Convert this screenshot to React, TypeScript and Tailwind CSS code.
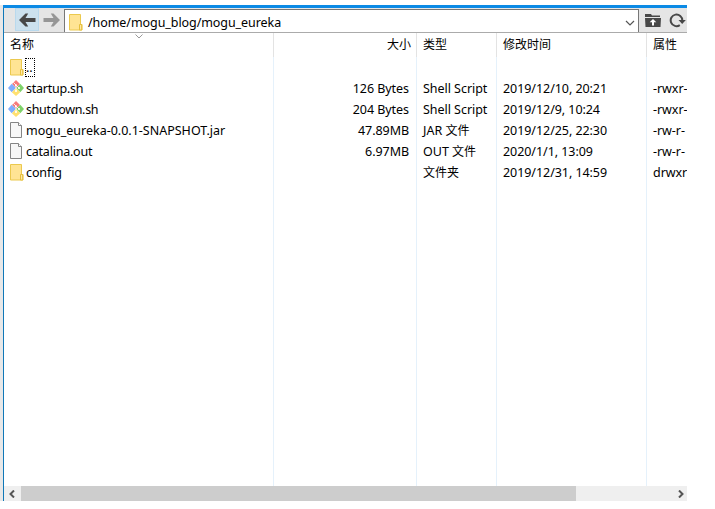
import type { ReactNode } from 'react'

type Kind = 'folder' | 'script' | 'file'
interface Entry { name: string; kind: Kind; size: string; type: string; date: string; attr: string; tracking?: string }

const entries: Entry[] = [
  { name: '..', kind: 'folder', size: '', type: '', date: '', attr: '' },
  { name: 'startup.sh', kind: 'script', size: '126 Bytes', type: 'Shell Script', date: '2019/12/10, 20:21', attr: '-rwxr-', tracking: 'tracking-[-0.24px]' },
  { name: 'shutdown.sh', kind: 'script', size: '204 Bytes', type: 'Shell Script', date: '2019/12/9, 10:24', attr: '-rwxr-', tracking: 'tracking-[-0.3px]' },
  { name: 'mogu_eureka-0.0.1-SNAPSHOT.jar', kind: 'file', size: '47.89MB', type: 'JAR 文件', date: '2019/12/25, 22:30', attr: '-rw-r-' },
  { name: 'catalina.out', kind: 'file', size: '6.97MB', type: 'OUT 文件', date: '2020/1/1, 13:09', attr: '-rw-r-', tracking: 'tracking-[-0.22px]' },
  { name: 'config', kind: 'folder', size: '', type: '文件夹', date: '2019/12/31, 14:59', attr: 'drwxr', tracking: 'tracking-[-0.1px]' },
]

function FolderIcon() {
  return (
    <svg width="14" height="17" viewBox="0 0 14 17" className="shrink-0">
      <path d="M.5.5h11v10h1.5v5.5H.5z" fill="#ffe494" stroke="#ebc94e" />
      <path d="M10.500 16v-5.500h2.200V16z" fill="#ffe9a8" stroke="#e6bf3d" />
    </svg>
  )
}

function FileIcon() {
  return (
    <svg width="13" height="16" viewBox="0 0 13 16" className="-mt-0.5 shrink-0">
      <path d="M.5.5h8l3 3v12H.5z" fill="#f7f7f7" stroke="#858585" />
      <path d="M8.500.5v3h3" fill="#fff" stroke="#858585" />
    </svg>
  )
}

function ScriptIcon() {
  return (
    <svg width="16" height="16" viewBox="0 0 16 16" className="-mt-0.5 shrink-0">
      <path d="M8 0l4 4-4 4-4-4z" fill="#f77b7b" />
      <path d="M3.700 3.700L8 8l-4.300 4.300L0 8z" fill="#80aeff" />
      <path d="M12.300 3.700L16 8l-3.700 4.300L8 8z" fill="#7fd26a" />
      <path d="M8 8l4.200 4.200L8 16l-4.200-3.800z" fill="#ffe070" />
      <path d="M5.500 2.500L8 5v6M8 5l3 3" fill="none" stroke="#fff" strokeOpacity=".85" strokeWidth="1" />
      <circle cx="8" cy="5.200" r="1" fill="#fff" />
      <circle cx="8" cy="11" r="1.100" fill="#fff" />
      <circle cx="11" cy="8" r="1.100" fill="#fff" />
    </svg>
  )
}

const icons: Record<Kind, ReactNode> = { folder: <FolderIcon />, script: <ScriptIcon />, file: <FileIcon /> }

function Arrow({ flip, color }: { flip?: boolean; color: string }) {
  return (
    <svg width="17" height="14" viewBox="0 0 17 14" className={flip ? '-scale-x-100' : ''}>
      <path d="M0 7L6.500.5H9.200L6.500 5h10v4h-10l2.700 4.500H6.500z" fill={color} />
    </svg>
  )
}

const grid = 'grid grid-cols-[270px_143px_80px_150px_40px]'
const line = 'border-[#e5f1fb]'
const headLine = 'border-[#e3e3e3]'

function TypeText({ value }: { value: string }) {
  const split = value.search(/[\u4e00-\u9fff]/)
  if (split < 0) return <span className="tracking-[-0.04px]">{value}</span>
  return <>{value.slice(0, split)}<span className="text-[12px]">{value.slice(split)}</span></>
}

function Row({ entry }: { entry: Entry }) {
  return (
    <div className={`${grid} h-[21px] leading-[21px]`}>
      <div className={`flex items-center border-r ${line}`}>
        <span className={`flex w-[22px] shrink-0 items-center ${entry.kind === 'script' ? 'pl-1' : 'pl-1.5'}`}>{icons[entry.kind]}</span>
        {entry.name === '..' ? (
          <span className="-ml-px h-[19px] w-[10px] border border-dotted border-black leading-[17px]">..</span>
        ) : (
          <span className={entry.tracking}>{entry.name}</span>
        )}
      </div>
      <div className={`border-r pr-[7px] text-right tracking-[-0.06px] ${line}`}>{entry.size}</div>
      <div className={`border-r pl-1.5 ${line}`}><TypeText value={entry.type} /></div>
      <div className={`border-r pl-1.5 tracking-[-0.06px] ${line}`}>{entry.date}</div>
      <div className="overflow-hidden pl-1.5 tracking-[-0.05px]">{entry.attr}</div>
    </div>
  )
}

export default function App() {
  return (
    <div className="h-[509px] w-[715px] overflow-hidden bg-white pt-[5px] text-[12.5px] whitespace-nowrap text-black [font-family:'Noto_Sans','Noto_Sans_CJK_SC',sans-serif]">
      <div className="flex h-[496px] w-[687px]">
        <div className="w-[3px] bg-[#e8e8e8]" />
        <div className="flex w-[684px] flex-col border-l border-[#1078b8]">
          <div className="-ml-px h-[3px] shrink-0 bg-[#0b8ae5]" />
          <div className="flex h-[25px] shrink-0 items-stretch border-b border-[#ababab] bg-[#e5e5e5]">
            <div className="ml-[11px] flex h-[23px] w-6 items-center justify-center border border-[#b9d9ed] bg-[#cce1ee] pt-px"><Arrow color="#484848" /></div>
            <div className="flex w-[25px] items-center justify-center"><Arrow flip color="#969696" /></div>
            <div className="mt-px flex w-[575px] items-center border border-b-0 border-[#777] bg-white pl-1">
              <span className="pt-0.5"><FolderIcon /></span>
              <span className="ml-[5px] pt-[5px] tracking-[-0.07px]">/home/mogu_blog/mogu_eureka</span>
              <svg width="10" height="7" viewBox="0 0 10 7" className="mt-1 mr-[3px] ml-auto"><path d="M1 1l4 4 4-4" fill="none" stroke="#555" strokeWidth="1.200" /></svg>
            </div>
            <div className="flex grow items-center pl-1.5">
              <svg width="16" height="13" viewBox="0 0 16 13"><path d="M0 0h6l1 1.500h8v1.500H0zM0 4h16l-.5 9H.5z" fill="#484848" /><path d="M8 5l3.300 3.300H9V11.500H7V8.300H4.700z" fill="#fff" /></svg>
              <svg width="17" height="15" viewBox="0 0 17 15" className="ml-2"><path d="M10.800 12.100A5.800 5.800 0 1 1 13.300 7.500" fill="none" stroke="#484848" strokeWidth="2" /><path d="M9.500 7h7.300l-3.600 4z" fill="#484848" /></svg>
            </div>
          </div>
          <div className={`${grid} relative h-6 shrink-0 text-[12px] leading-[23px]`}>
            <div className={`border-r pl-1.5 ${headLine}`}>名称</div>
            <div className={`border-r pr-[5px] text-right ${headLine}`}>大小</div>
            <div className={`border-r pl-1.5 ${headLine}`}>类型</div>
            <div className={`border-r pl-1.5 ${headLine}`}>修改时间</div>
            <div className="pl-1.5">属性</div>
            <svg width="8" height="5" viewBox="0 0 8 5" className="absolute top-px left-[131px]"><path d="M.5.5L4 4 7.500.5" fill="none" stroke="#999" /></svg>
          </div>
          {entries.map((entry) => <Row key={entry.name} entry={entry} />)}
          <div className={`${grid} grow`}>
            {[0, 1, 2, 3].map((n) => <div key={n} className={`border-r ${line}`} />)}
          </div>
          <div className="flex h-[15px] shrink-0 items-center bg-[#efefef]">
            <div className="flex w-[17px] justify-center pr-0.5"><svg width="6" height="8" viewBox="0 0 6 8"><path d="M5 .5L1.500 4 5 7.500" fill="none" stroke="#555" strokeWidth="2" /></svg></div>
            <div className="h-full w-[555px] bg-[#cdcdcd]" />
            <svg width="6" height="8" viewBox="0 0 6 8" className="mr-[3px] ml-auto"><path d="M1 .5L4.500 4 1 7.500" fill="none" stroke="#555" strokeWidth="2" /></svg>
          </div>
        </div>
      </div>
    </div>
  )
}
